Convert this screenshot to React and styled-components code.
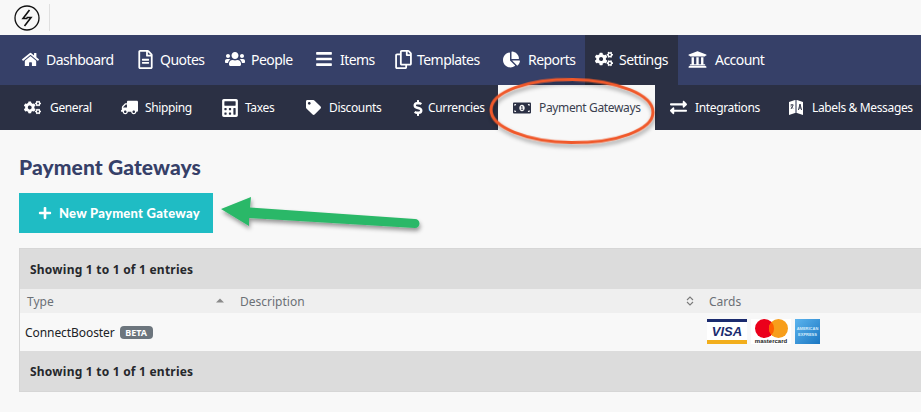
import React from "react";
import styled, { createGlobalStyle } from "styled-components";
import {
  FaHome, FaRegFileAlt, FaUsers, FaBars, FaRegCopy, FaChartPie, FaCogs, FaUniversity,
  FaTruck, FaCalculator, FaTag, FaDollarSign, FaMoneyBillAlt, FaExchangeAlt, FaPlus,
} from "react-icons/fa";

const Global = createGlobalStyle`
  html, body { margin: 0; padding: 0; background: #f8f8f8; }
  body { font-family: "Noto Sans", "DejaVu Sans", sans-serif; overflow: hidden; }
`;
const Page = styled.div`
  position: relative;
  width: 921px;
  height: 412px;
  overflow: hidden;
  background: #f8f8f8;
`;
const TopBar = styled.div`
  height: 35px;
  display: flex;
  align-items: center;
  padding-left: 14px;
  box-sizing: border-box;
`;
const Logo = styled.svg`
  width: 26px;
  height: 26px;
  display: block;
`;
const Divider = styled.div`
  width: 1px;
  height: 27px;
  margin-left: 9px;
  background: #e0e0e0;
`;
const MainNav = styled.nav`
  height: 50px;
  background: #364068;
  display: flex;
  padding-left: 12px;
`;
const MainItem = styled.a`
  width: ${(p) => p.$w}px;
  flex: none;
  box-sizing: border-box;
  padding: 0 0 2px 10px;
  display: flex;
  align-items: center;
  color: #fff;
  font-size: 14px;
  letter-spacing: -0.55px;
  background: ${(p) => (p.$active ? "#2b3044" : "transparent")};
  white-space: nowrap;
`;
const IconSlot = styled.span`
  width: ${(p) => p.$w}px;
  flex: none;
  display: flex;
  align-items: center;
  svg { display: block; transform: ${(p) => (p.$flip ? "scaleX(-1)" : "none")}; }
`;
const SubNav = styled.nav`
  height: 45px;
  background: #2b3044;
  display: flex;
  padding-left: 9px;
`;
const SubItem = styled.a`
  width: ${(p) => p.$w}px;
  flex: none;
  box-sizing: border-box;
  padding-left: 15px;
  display: flex;
  align-items: center;
  color: ${(p) => (p.$active ? "#3a3f4f" : "#fff")};
  background: ${(p) => (p.$active ? "#f8f8f8" : "transparent")};
  font-size: 12px;
  letter-spacing: -0.36px;
  white-space: nowrap;
`;
const Content = styled.main`
  padding: 25px 0 0 19px;
`;
const Title = styled.h1`
  margin: 0;
  font-family: "Lato", "Noto Sans", sans-serif;
  font-size: 21px;
  line-height: 24px;
  font-weight: 900;
  color: #364068;
  letter-spacing: 0.1px;
`;
const Button = styled.button`
  display: flex;
  align-items: center;
  width: 194px;
  height: 40px;
  margin-top: 14px;
  padding: 0 0 0 19px;
  border: 0;
  background: #1fbcc4;
  color: #fff;
  font-family: "Lato", "Noto Sans", sans-serif;
  font-weight: 900;
  font-size: 13px;
  letter-spacing: 0.25px;
  svg { display: block; margin-right: 7px; }
`;
const Table = styled.section`
  margin-top: 15px;
  border: 1px solid #d6d6d6;
  border-right: 0;
  margin-right: -1px;
`;
const Strip = styled.div`
  height: 40px;
  background: #dcdcdc;
  display: flex;
  align-items: center;
  padding-left: 10px;
  font-size: 12px;
  font-weight: 700;
  letter-spacing: 0.22px;
  color: #26282c;
`;
const HeadRow = styled.div`
  height: 24px;
  background: #efefef;
  display: grid;
  grid-template-columns: 213px 470px 1fr;
  align-items: center;
  font-size: 12px;
  color: #6b7076;
`;
const HeadCell = styled.div`
  position: relative;
  padding-left: ${(p) => p.$pl || 0}px;
  display: flex;
  align-items: center;
`;
const Sort = styled.svg`
  position: absolute;
  right: ${(p) => p.$r}px;
  top: 50%;
  transform: translateY(-50%);
  width: 8px;
  height: 10px;
`;
const BodyRow = styled.div`
  height: 38px;
  display: grid;
  grid-template-columns: 687px 1fr;
  align-items: center;
  font-size: 12px;
  color: #202226;
`;
const NameCell = styled.div`
  padding-left: 5px;
  display: flex;
  align-items: center;
  letter-spacing: -0.07px;
`;
const Badge = styled.span`
  margin-left: 5px;
  height: 13px;
  width: 33px;
  border-radius: 4px;
  background: #6c757d;
  color: #fff;
  font-size: 9px;
  font-weight: 700;
  line-height: 13px;
  letter-spacing: 0;
  text-align: center;
`;
const Cards = styled.div`
  display: flex;
  align-items: flex-start;
  margin-top: -1px;
`;
const Visa = styled.div`
  width: 40px;
  height: 25px;
  box-sizing: border-box;
  background: #fff;
  border-top: 3px solid #1a2a6e;
  border-bottom: 4px solid #f2ae1c;
  display: flex;
  align-items: center;
  justify-content: center;
  font: italic 900 13px/1 "Liberation Sans", sans-serif;
  color: #1a2a6e;
`;
const Master = styled.div`
  position: relative;
  width: 40px;
  height: 25px;
  margin-left: 4px;
  background: #fff;
  display: flex;
  justify-content: center;
  align-items: flex-end;
  font: 700 6px/6px "Liberation Sans", sans-serif;
  color: #222;
`;
const MasterMark = styled.svg`
  position: absolute;
  top: 0;
  left: 4px;
  width: 33px;
  height: 19px;
`;
const Amex = styled.div`
  width: 25px;
  height: 25px;
  margin-left: 4px;
  background: linear-gradient(135deg, #5cb4ee, #1b77c2);
  color: #d5ecfb;
  font: 700 4px/6px "Liberation Sans", sans-serif;
  display: flex;
  align-items: center;
  justify-content: center;
  text-align: center;
`;
const Overlay = styled.svg`
  position: absolute;
  left: 0;
  top: 0;
  width: 921px;
  height: 412px;
  pointer-events: none;
`;

const Labels = ({ size }) => (
  <svg width={size} height={size + 2} viewBox="0 0 16 18">
    <path d="M1 3l6 -2v13l-6 2zM9 1l6 2v13l-6 -2z" fill="#fff" />
    <path d="M7 1l2 0v13l-2 0z" fill="#8f93a3" />
    <path d="M2.5 6h3M4 5v1.5M3 10l2-3.5M3 7.5l2 2" stroke="#2b3044" strokeWidth="0.9" fill="none" />
    <path d="M10.5 11l1.5-6 1.5 6M11 9h2" stroke="#2b3044" strokeWidth="1" fill="none" />
  </svg>
);

const main = [
  ["Dashboard", FaHome, 114, 24, 17],
  ["Quotes", FaRegFileAlt, 89, 24, 19],
  ["People", FaUsers, 90, 26, 20],
  ["Items", FaBars, 79, 25, 18],
  ["Templates", FaRegCopy, 109, 23, 19],
  ["Reports", FaChartPie, 92, 25, 17],
  ["Settings", FaCogs, 93, 24, 18],
  ["Account", FaUniversity, 100, 27, 19],
];
const sub = [
  ["General", FaCogs, 97, 26, 17],
  ["Shipping", FaTruck, 100, 24, 17, false, true],
  ["Taxes", FaCalculator, 85, 24, 18],
  ["Discounts", FaTag, 104, 23, 15],
  ["Currencies", FaDollarSign, 103, 18, 16],
  ["Payment Gateways", FaMoneyBillAlt, 157, 26, 18, true],
  ["Integrations", FaExchangeAlt, 118, 25, 17],
  ["Labels & Messages", Labels, 148, 24, 16],
];

export default function App() {
  return (
    <Page>
      <Global />
      <TopBar>
        <Logo viewBox="0 0 26 26">
          <circle cx="13" cy="13" r="12" fill="none" stroke="#111" strokeWidth="1.3" />
          <path d="M15.5 5 L9 13.5 H13.5 M12.5 12.5 H17 L10.5 21" fill="none" stroke="#111" strokeWidth="1.6" />
        </Logo>
        <Divider />
      </TopBar>
      <MainNav>
        {main.map(([label, Icon, w, slot, size]) => (
          <MainItem key={label} $w={w} $active={label === "Settings"}>
            <IconSlot $w={slot}><Icon size={size} color="#fff" /></IconSlot>
            {label}
          </MainItem>
        ))}
      </MainNav>
      <SubNav>
        {sub.map(([label, Icon, w, slot, size, active, flip]) => (
          <SubItem key={label} $w={w} $active={active}>
            <IconSlot $w={slot} $flip={flip}><Icon size={size} color={active ? "#2b3044" : "#fff"} /></IconSlot>
            {label}
          </SubItem>
        ))}
      </SubNav>
      <Content>
        <Title>Payment Gateways</Title>
        <Button><FaPlus size={14} />New Payment Gateway</Button>
        <Table>
          <Strip>Showing 1 to 1 of 1 entries</Strip>
          <HeadRow>
            <HeadCell $pl={7}>
              Type
              <Sort $r={9} viewBox="0 0 8 10"><path d="M0 6.5L4 2.5L8 6.5z" fill="#8a8a8a" /></Sort>
            </HeadCell>
            <HeadCell $pl={7}>
              Description
              <Sort $r={9} viewBox="0 0 8 10"><path d="M1 4L4 1L7 4M1 6L4 9L7 6" fill="none" stroke="#7a7a7a" strokeWidth="1.1" /></Sort>
            </HeadCell>
            <HeadCell $pl={6}>Cards</HeadCell>
          </HeadRow>
          <BodyRow>
            <NameCell>ConnectBooster<Badge>BETA</Badge></NameCell>
            <Cards>
              <Visa>VISA</Visa>
              <Master>
                <MasterMark viewBox="0 0 33 19">
                  <circle cx="9.5" cy="9.5" r="9.5" fill="#eb001b" />
                  <circle cx="23.5" cy="9.5" r="9.5" fill="#f79e1b" />
                  <path d="M16.5 3a9.5 9.5 0 0 1 0 13a9.5 9.5 0 0 1 0-13z" fill="#ff5f00" />
                </MasterMark>
                mastercard
              </Master>
              <Amex>AMERICAN EXPRESS</Amex>
            </Cards>
          </BodyRow>
          <Strip>Showing 1 to 1 of 1 entries</Strip>
        </Table>
      </Content>
      <Overlay viewBox="0 0 921 412">
        <defs>
          <filter id="sh" x="-20%" y="-20%" width="140%" height="150%">
            <feDropShadow dx="1" dy="3" stdDeviation="2" floodColor="#000" floodOpacity="0.4" />
          </filter>
        </defs>
        <ellipse cx="572" cy="111" rx="81" ry="31.5" fill="none" stroke="#f0592a" strokeWidth="3" filter="url(#sh)" transform="rotate(1 572 111)" />
        <path d="M221 209L251 197L250 207.5L415 219A3.5 3.5 0 0 1 415 228L249 218L249 226z" fill="#2bb868" filter="url(#sh)" />
      </Overlay>
    </Page>
  );
}
